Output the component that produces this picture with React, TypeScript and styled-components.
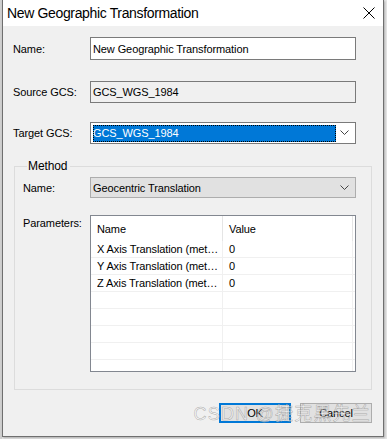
import React from "react";
import styled, { createGlobalStyle } from "styled-components";

const Global = createGlobalStyle`
html, body {
  margin: 0;
  padding: 0;
  background: #d9d9d9;
  font-family: "Segoe UI", "Liberation Sans", Arial, sans-serif;
}
`;

const Page = styled.div`
width: 387px;
height: 439px;
display: flex;
align-items: flex-start;
padding-left: 2px;
box-sizing: border-box;
background: linear-gradient(to right, #cfcfcf 0 2px, #e6e6e6 2px);
`;

const Dialog = styled.div`
width: 382px;
height: 437px;
box-sizing: border-box;
border: 1px solid #6f6f6f;
border-top: none;
background: #f0f0f0;
display: flex;
flex-direction: column;
box-shadow: 1px 1px 2px rgba(0, 0, 0, 0.25);
`;

const TitleBar = styled.div`
height: 26px;
background: #ffffff;
display: flex;
align-items: center;
justify-content: space-between;
padding: 0 8px 0 4px;
flex-shrink: 0;
`;

const Title = styled.div`
font-size: 14px;
color: #000;
letter-spacing: -0.35px;
`;

const Body = styled.div`
flex: 1;
display: flex;
flex-direction: column;
padding: 0 10px 0 10px;
position: relative;
font-size: 11px;
letter-spacing: -0.1px;
`;

const Row = styled.div<{ $top: number }>`
display: flex;
align-items: center;
margin-top: ${p => p.$top}px;
`;

const Label = styled.div<{ $w: number }>`
width: ${p => p.$w}px;
color: #000;
flex-shrink: 0;
`;

const Field = styled.div<{ $h: number; $bg: string; $border: string }>`
width: 266px;
height: ${p => p.$h}px;
box-sizing: border-box;
border: 1px solid ${p => p.$border};
background: ${p => p.$bg};
display: flex;
align-items: center;
padding-left: 2px;
color: #000;
position: relative;
`;

const Selected = styled.div`
width: 243px;
height: 17px;
background: #0078d7;
color: #fff;
display: flex;
align-items: center;
box-sizing: border-box;
outline: 1px dotted #000;
outline-offset: -1px;
`;

const Chevron = styled.svg`
position: absolute;
right: 6px;
top: 50%;
margin-top: -3px;
`;

const Group = styled.fieldset`
margin: 15px 1px 0 1px;
padding: 0 0 0 8px;
border: 1px solid #dcdcdc;
height: 231px;
box-sizing: border-box;
display: flex;
flex-direction: column;
`;

const Legend = styled.legend`
font-size: 12px;
padding: 0 3px 0 1px;
margin-left: 4px;
color: #000;
`;

const ParamRow = styled.div`
display: flex;
align-items: flex-start;
margin-top: 17px;
`;

const Table = styled.div`
width: 266px;
height: 157px;
box-sizing: border-box;
border: 1px solid #828790;
background: #fff;
overflow: hidden;
`;

const Header = styled.div`
display: grid;
grid-template-columns: 132px 130px;
height: 25px;
`;

const HeadCell = styled.div`
display: flex;
align-items: center;
padding-left: 6px;
border-right: 1px solid #e5e5e5;
box-sizing: border-box;
`;

const GridRow = styled.div`
display: grid;
grid-template-columns: 132px 130px;
height: 17px;
border-bottom: 1px solid #f0f0f0;
box-sizing: border-box;
`;

const Cell = styled.div`
padding-left: 6px;
padding-right: 2px;
display: flex;
align-items: center;
white-space: nowrap;
overflow: hidden;
box-sizing: border-box;
border-right: 1px solid #f0f0f0;
`;

const CellText = styled.span`
overflow: hidden;
text-overflow: ellipsis;
white-space: nowrap;
`;

const Buttons = styled.div`
display: flex;
justify-content: flex-end;
gap: 9px;
margin-top: 13px;
padding-right: 1px;
`;

const Button = styled.div<{ $primary?: boolean }>`
width: 72px;
height: 20px;
box-sizing: border-box;
border: ${p => (p.$primary ? "2px solid #0078d7" : "1px solid #adadad")};
background: #e1e1e1;
display: flex;
align-items: center;
justify-content: center;
color: #000;
`;

const Watermark = styled.div`
position: absolute;
right: 12px;
bottom: 11px;
font-size: 18px;
color: rgba(255, 255, 255, 0.5);
-webkit-text-stroke: 0.5px rgba(120, 120, 120, 0.6);
font-family: "Liberation Sans", "Noto Sans CJK SC", sans-serif;
letter-spacing: 1.2px;
pointer-events: none;
`;

const params = [
  { name: "X Axis Translation (meters)", value: "0" },
  { name: "Y Axis Translation (meters)", value: "0" },
  { name: "Z Axis Translation (meters)", value: "0" },
  { name: "", value: "" },
  { name: "", value: "" },
  { name: "", value: "" },
  { name: "", value: "" },
  { name: "", value: "" },
];

const Down = () => (
  <Chevron width="9" height="5" viewBox="0 0 9 5">
    <polyline points="0.5,0.5 4.5,4.5 8.5,0.5" fill="none" stroke="#444" strokeWidth="1" />
  </Chevron>
);

export default function App() {
  return (
    <>
      <Global />
      <Page>
        <Dialog>
          <TitleBar>
            <Title>New Geographic Transformation</Title>
            <svg width="12" height="12" viewBox="0 0 12 12">
              <path d="M0.5 0.5 L11.5 11.5 M11.5 0.5 L0.5 11.5" stroke="#000" strokeWidth="1" />
            </svg>
          </TitleBar>
          <Body>
            <Row $top={11}>
              <Label $w={77}>Name:</Label>
              <Field $h={23} $bg="#fff" $border="#7a7a7a">New Geographic Transformation</Field>
            </Row>
            <Row $top={21}>
              <Label $w={77}>Source GCS:</Label>
              <Field $h={22} $bg="#f0f0f0" $border="#7a7a7a">GCS_WGS_1984</Field>
            </Row>
            <Row $top={19}>
              <Label $w={77}>Target GCS:</Label>
              <Field $h={22} $bg="#fff" $border="#7a7a7a">
                <Selected>GCS_WGS_1984</Selected>
                <Down />
              </Field>
            </Row>
            <Group>
              <Legend>Method</Legend>
              <Row $top={4}>
                <Label $w={67}>Name:</Label>
                <Field $h={21} $bg="#e1e1e1" $border="#adadad">
                  Geocentric Translation
                  <Down />
                </Field>
              </Row>
              <ParamRow>
                <Label $w={67} style={{ paddingTop: 2 }}>Parameters:</Label>
                <Table>
                  <Header>
                    <HeadCell>Name</HeadCell>
                    <HeadCell>Value</HeadCell>
                  </Header>
                  {params.map((p, i) => (
                    <GridRow key={i}>
                      <Cell><CellText>{p.name}</CellText></Cell>
                      <Cell>{p.value}</Cell>
                    </GridRow>
                  ))}
                </Table>
              </ParamRow>
            </Group>
            <Buttons>
              <Button $primary>OK</Button>
              <Button>Cancel</Button>
            </Buttons>
            <Watermark>CSDN @捷克黑先兰</Watermark>
          </Body>
        </Dialog>
      </Page>
    </>
  );
}
